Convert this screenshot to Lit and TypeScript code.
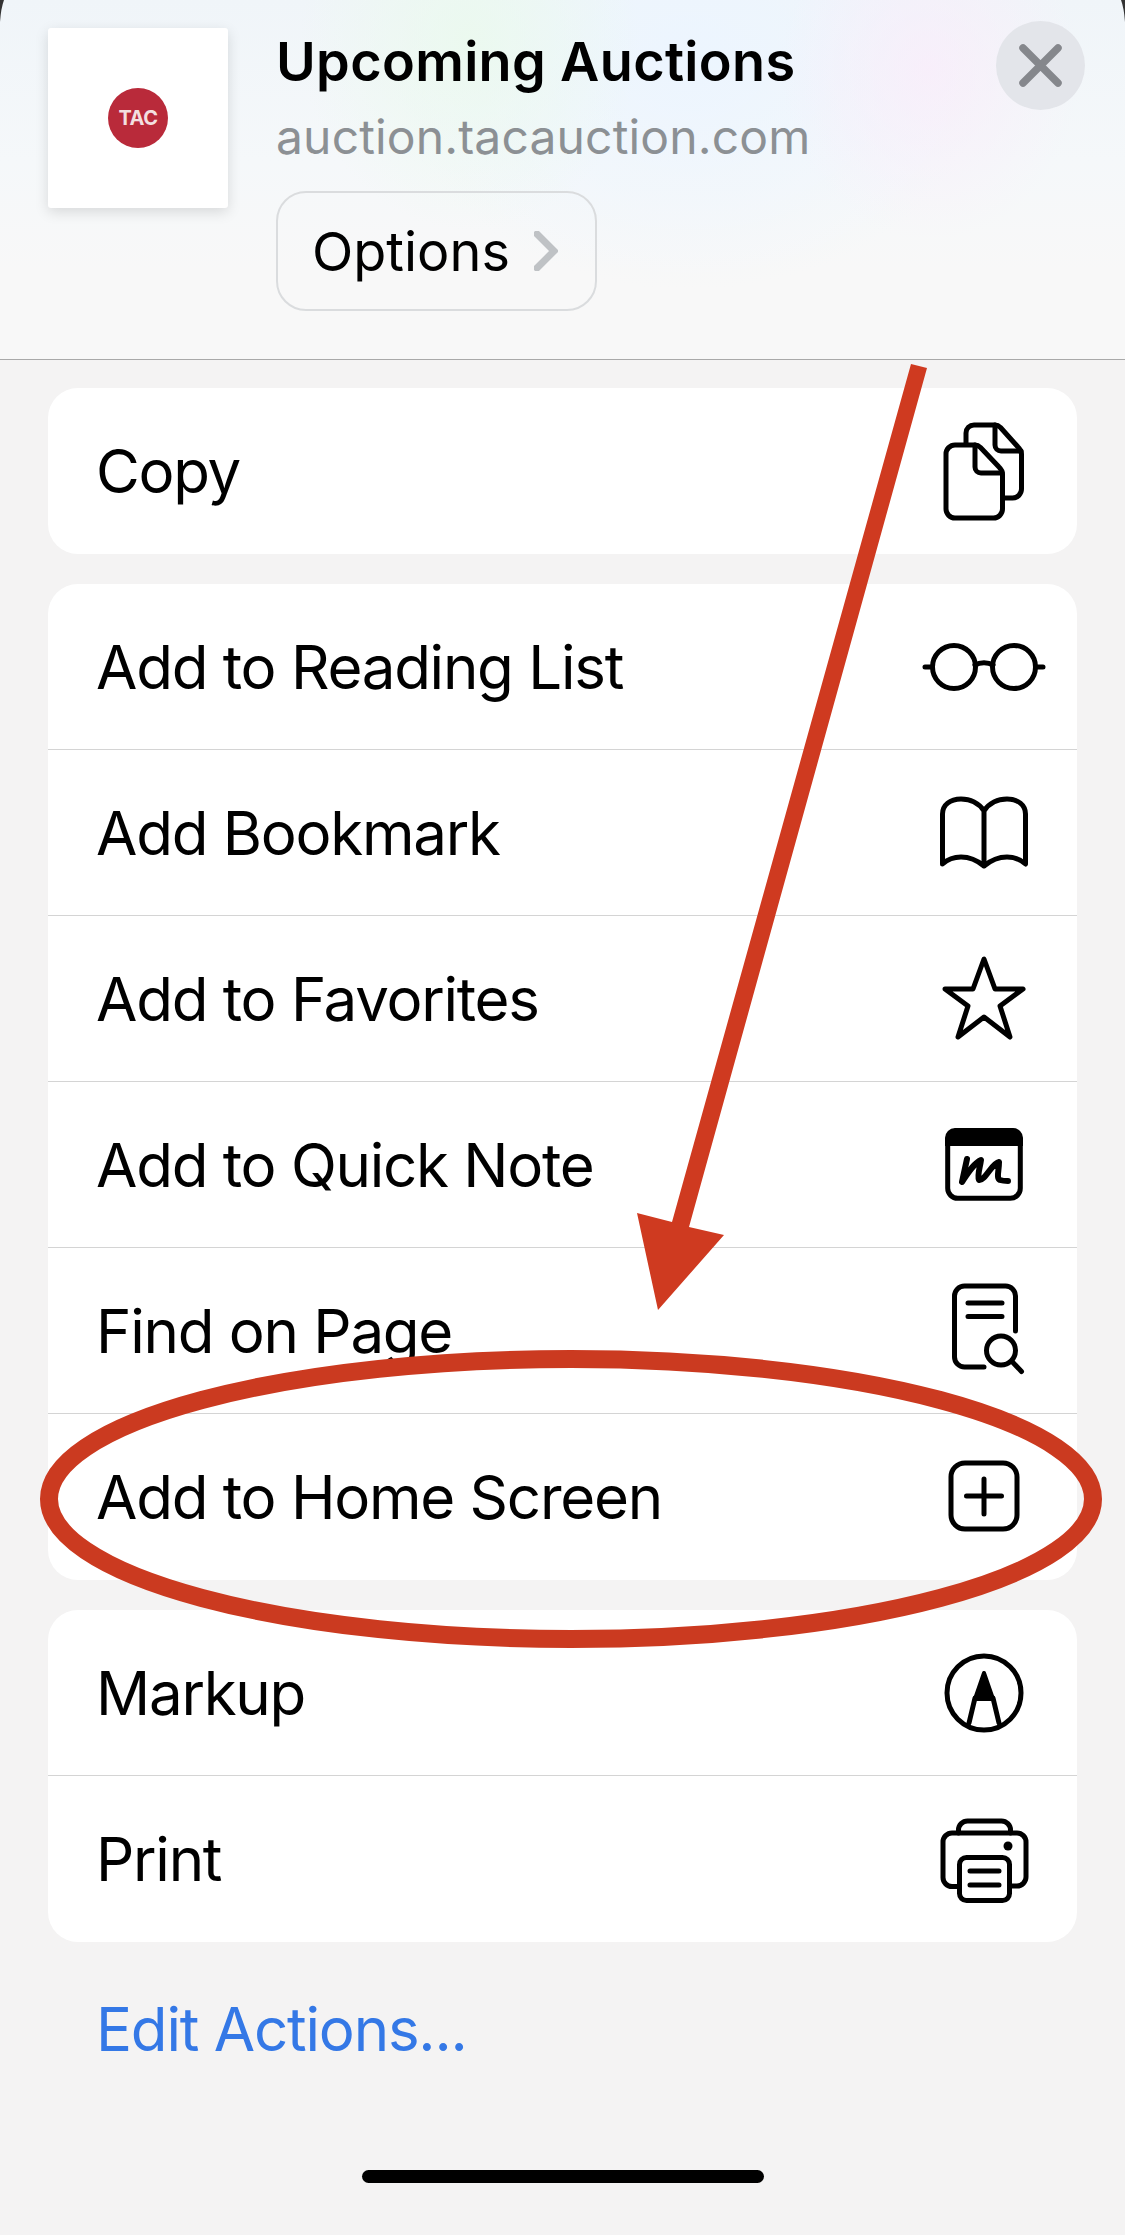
import { LitElement, html, css, svg } from "lit";
import { customElement } from "lit/decorators.js";

const icons: Record<string, unknown> = {
  copy: svg`<path d="M42 33V22a8 8 0 0 1 8-8h21c2 0 4 1 5.5 2.5L94 36c2 2 3.5 4 3.5 7v35a9 9 0 0 1-9 9H81"/><path d="M71 14v20a6 6 0 0 0 6 6h20"/><path d="M31 34h20c2 0 4 1 5.5 2.5L75 56c2 2 3.5 4 3.5 7v35a9 9 0 0 1-9 9H31a9 9 0 0 1-9-9V43a9 9 0 0 1 9-9z"/><path d="M51 34v22a6 6 0 0 0 6 6h21"/>`,
  glasses: svg`<circle cx="30" cy="60" r="21.5"/><circle cx="90" cy="60" r="21.5"/><path d="M51 58c5-3 13-3 18 0"/><path d="M1 60h7M112 60h7"/>`,
  book: svg`<path d="M60 38C55 30 46 26 37 26 26 26 18.5 32 18.5 41V91C24 86 30 84 37 84 46 84 54 88 60 93 66 88 74 84 83 84 90 84 96 86 101.5 91V41C101.5 32 94 26 83 26 74 26 65 30 60 38V93"/>`,
  star: svg`<path d="M60 20 49 50H21L44 67 34 98 60 78 86 98 76 67 99 50H71Z"/>`,
  note: svg`<rect x="23.7" y="25.7" width="72.6" height="67.6" rx="10"/><path class="fill" d="M31 23h58a10 10 0 0 1 10 10v8H21v-8a10 10 0 0 1 10-10z"/><path class="scribble" d="M43 54 38 77C44 68 50 58 57 55 56 63 53 70 55 75 61 76 68 58 75 57 75 66 72 73 76 75 79 76 82 76 84 76"/>`,
  find: svg`<path d="M91.5 60V25a10 10 0 0 0-10-10H40.5a10 10 0 0 0-10 10v61a10 10 0 0 0 10 10H60"/><path d="M44 32h34M44 45.5h34"/><circle cx="77" cy="79.5" r="14.5"/><path d="M88 90.5l9.5 10"/>`,
  plus: svg`<rect x="27" y="26" width="66" height="66" rx="14"/><path d="M60 42v35M42.5 59h35"/>`,
  markup: svg`<circle cx="60" cy="60" r="37"/><path class="tip" d="M60 40 51 66H69Z"/><path d="M51 65 45 90M69 65 75 90"/>`,
  print: svg`<path d="M34.5 34V31a9 9 0 0 1 9-9h34a9 9 0 0 1 9 9v3"/><path d="M33 87.5H28a9 9 0 0 1-9-9V43a9 9 0 0 1 9-9h65a9 9 0 0 1 9 9v35a9 9 0 0 1-9 9h-5"/><rect x="35.5" y="58.5" width="50" height="43" rx="7"/><circle class="fill" cx="84" cy="47" r="4.5"/><path d="M46 72h29M46 86h29"/>`,
};

const groups = [
  [["Copy", "copy"]],
  [
    ["Add to Reading List", "glasses"],
    ["Add Bookmark", "book"],
    ["Add to Favorites", "star"],
    ["Add to Quick Note", "note"],
    ["Find on Page", "find"],
    ["Add to Home Screen", "plus"],
  ],
  [
    ["Markup", "markup"],
    ["Print", "print"],
  ],
];

@customElement("app-root")
export class AppRoot extends LitElement {
  static styles = css`
    :host {
      display: block;
      width: 1125px;
      height: 2235px;
      position: relative;
      overflow: hidden;
      background: #f4f3f3;
      font-family: Inter, "Liberation Sans", sans-serif;
      color: #000;
    }
    .header {
      box-sizing: border-box;
      height: 360px;
      padding: 28px 40px 0 48px;
      display: flex;
      border-bottom: 1px solid #a9a9a9;
      background:
        radial-gradient(ellipse 150px 170px at 930px 70px, rgba(250, 236, 250, 0.75), transparent),
        radial-gradient(ellipse 170px 190px at 470px 40px, rgba(234, 250, 236, 0.8), transparent),
        radial-gradient(ellipse 300px 230px at 690px 60px, rgba(236, 245, 255, 0.95), transparent),
        linear-gradient(#f0f5f9 0, #f5f8fa 45%, #f8f8f8 75%, #f8f8f8 100%);
    }
    .thumb {
      width: 180px;
      height: 180px;
      flex: none;
      background: #fff;
      border-radius: 3px;
      box-shadow: 0 4px 14px rgba(0, 0, 0, 0.13);
      display: flex;
      align-items: center;
      justify-content: center;
      margin-right: 48px;
    }
    .logo {
      width: 60px;
      height: 60px;
      border-radius: 50%;
      background: #b92a3a;
      color: #f3dfe0;
      font-weight: 700;
      font-size: 20px;
      letter-spacing: -0.5px;
      display: flex;
      align-items: center;
      justify-content: center;
    }
    .meta {
      flex: 1;
      display: flex;
      flex-direction: column;
      align-items: flex-start;
    }
    .title {
      font-size: 54px;
      font-weight: 600;
      line-height: 60px;
      margin-top: 4px;
      letter-spacing: 0.35px;
    }
    .url {
      font-size: 48px;
      line-height: 60px;
      margin-top: 15px;
      color: #8c9094;
      letter-spacing: 0.15px;
    }
    .options {
      box-sizing: border-box;
      margin-top: 24px;
      height: 120px;
      width: 321px;
      border: 2.5px solid #dadcde;
      border-radius: 30px;
      display: flex;
      align-items: center;
      padding-left: 34px;
      font-size: 54px;
    }
    .options svg {
      width: 24px;
      height: 40px;
      margin-left: 24px;
      fill: none;
      stroke: #bfc2c5;
      stroke-width: 7;
      stroke-linecap: round;
      stroke-linejoin: miter;
    }
    .close {
      width: 89px;
      height: 89px;
      margin-top: -7px;
      border-radius: 50%;
      background: #e3e5ea;
      flex: none;
      display: flex;
      align-items: center;
      justify-content: center;
    }
    .close svg {
      width: 89px;
      height: 89px;
      fill: none;
      stroke: #85878c;
      stroke-width: 7.5;
      stroke-linecap: round;
    }
    .content {
      padding: 28px 48px 0;
      display: flex;
      flex-direction: column;
      gap: 30px;
    }
    .group {
      background: #fff;
      border-radius: 30px;
      overflow: hidden;
    }
    .row {
      box-sizing: border-box;
      height: 166px;
      display: flex;
      align-items: center;
      justify-content: space-between;
      padding: 0 33px 0 48px;
      font-size: 60px;
      letter-spacing: -1.25px;
      border-bottom: 1px solid #d4d4d4;
    }
    .row:last-child {
      border-bottom: none;
    }
    .row svg {
      width: 120px;
      height: 120px;
      overflow: visible;
      fill: none;
      stroke: #000;
      stroke-width: 5;
      stroke-linecap: round;
      stroke-linejoin: round;
    }
    .row svg .fill {
      fill: #000;
      stroke: none;
    }
    .row svg .tip {
      fill: #000;
      stroke-width: 4;
    }
    .row svg .scribble {
      stroke-width: 6;
    }
    .edit {
      padding: 59px 0 0 96px;
      font-size: 60px;
      line-height: 56px;
      letter-spacing: -1.2px;
      color: #3478e6;
    }
    .home {
      width: 402px;
      height: 13px;
      border-radius: 7px;
      background: #000;
      margin: 113px auto 0;
    }
    .marks {
      position: absolute;
      left: 0;
      top: 0;
      width: 1125px;
      height: 2235px;
      pointer-events: none;
    }
  `;

  render() {
    return html`
      <div class="header">
        <div class="thumb"><div class="logo">TAC</div></div>
        <div class="meta">
          <div class="title">Upcoming Auctions</div>
          <div class="url">auction.tacauction.com</div>
          <div class="options">
            Options
            <svg viewBox="0 0 24 40"><path d="M3 3 20 20 3 37" /></svg>
          </div>
        </div>
        <div class="close">
          <svg viewBox="0 0 89 89"><path d="M27 27 62 62M62 27 27 62" /></svg>
        </div>
      </div>
      <div class="content">
        ${groups.map(
          (g) => html`<div class="group">
            ${g.map(
              ([label, icon]) => html`<div class="row">
                <span>${label}</span>
                <svg viewBox="0 0 120 120">${icons[icon]}</svg>
              </div>`
            )}
          </div>`
        )}
      </div>
      <div class="edit">Edit Actions...</div>
      <div class="home"></div>
      <svg class="marks" viewBox="0 0 1125 2235">
        <path d="M0 0H4Q1 8 0 22Z" fill="#333" />
        <path d="M1125 0H1121Q1124 8 1125 22Z" fill="#333" />
        <ellipse cx="571" cy="1499" rx="522" ry="140" fill="none" stroke="#cb3a20" stroke-width="18" />
        <polygon points="911,364 927,368 689,1227 724,1235 658,1310 637,1213 672,1222" fill="#cf3a20" />
      </svg>
    `;
  }
}
